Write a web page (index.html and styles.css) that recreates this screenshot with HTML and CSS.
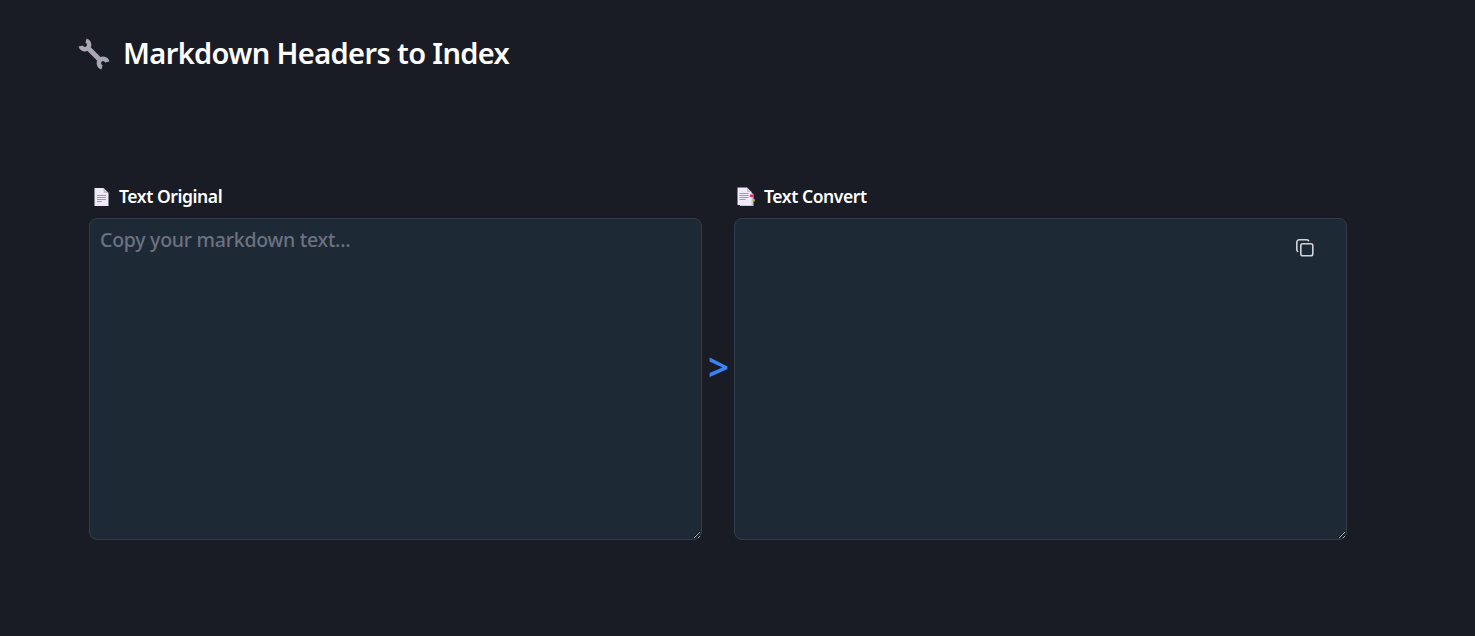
FILE: index.html
```html
<!DOCTYPE html>
<html lang="en">
<head>
<meta charset="utf-8">
<title>Markdown Headers to Index</title>
<link rel="stylesheet" href="styles.css">
</head>
<body>
<header class="header">
  <svg class="wrench" viewBox="0 0 32 32" width="32" height="32">
    <path class="wrench-shaft" d="M9.500 9.500L22.500 22.500"/>
    <path class="wrench-jaw" d="M8 2.700A4.300 4.300 0 1 1 2.700 8M24 29.300A4.300 4.300 0 1 1 29.300 24"/>
  </svg>
  <h1 class="title">Markdown Headers to Index</h1>
</header>
<main class="converter">
  <section class="panel">
    <label class="label" for="source">
      <svg class="page-icon" viewBox="0 0 20 20" width="20" height="20">
        <path fill="#eeeaf8" d="M3.500 1h9l5 5v13h-14z"/>
        <path fill="#c5bfd5" d="M12.500 1l5 5h-5z"/>
        <path class="page-lines" d="M6 8.500h9M6 10.500h9M6 12.500h9M6 14.500h5"/>
      </svg>
      <span class="label-text">Text Original</span>
    </label>
    <textarea class="field" id="source" placeholder="Copy your markdown text..."></textarea>
  </section>
  <span class="arrow">&gt;</span>
  <section class="panel">
    <label class="label" for="result">
      <svg class="page-icon" viewBox="0 0 20 20" width="20" height="20">
        <path fill="#cbc5d9" d="M4 4h9l4.500 3v12H4z"/>
        <path fill="#eeeaf8" d="M1.500 0.500h9.500l4.500 4.500v13h-14z"/>
        <path fill="#c5bfd5" d="M11 0.500l4.500 4.500h-4.500z"/>
        <path class="page-lines" d="M3.500 6.500h9M3.500 8.500h9M3.500 10.500h9M3.500 12.500h6"/>
        <path fill="#dc2671" d="M14 7.500h3v2.500h-3z"/>
        <path fill="#d5ad39" d="M16.500 12h2.300v2.500h-2.300z"/>
      </svg>
      <span class="label-text">Text Convert</span>
    </label>
    <div class="output">
      <textarea class="field" id="result"></textarea>
      <button class="copy" type="button" aria-label="Copy">
        <svg class="copy-icon" viewBox="0 0 20 20" width="20" height="20">
          <rect x="5.800" y="5.800" width="12" height="12" rx="2"/>
          <path d="M2.700 13.500C2.100 13 1.800 12.400 1.800 11.600V4.300A2.500 2.500 0 0 1 4.300 1.800h7.400c.8 0 1.400.3 1.900.9"/>
        </svg>
      </button>
    </div>
  </section>
</main>
</body>
</html>
```
FILE: styles.css
```css
* { box-sizing: border-box; }
body {
  margin: 0;
  min-height: 636px;
  background: #191b25;
  color: #fff;
  font-family: "Noto Sans", "Open Sans", sans-serif;
}
.header {
  display: flex;
  align-items: center;
  gap: 13px;
  height: 108px;
  padding-left: 78px;
}
.wrench { fill: none; stroke: #aaa6b4; }
.wrench-shaft { stroke-width: 5; }
.wrench-jaw { stroke-width: 4.4; }
.title {
  margin: 0;
  padding-bottom: 2px;
  font-size: 29px;
  line-height: 40px;
  font-weight: 600;
  letter-spacing: -0.62px;
}
.converter {
  display: flex;
  padding: 76px 0 0 89px;
}
.panel { width: 613px; }
.label {
  display: flex;
  align-items: center;
  gap: 7px;
  height: 25px;
  margin-bottom: 9px;
  padding-left: 2px;
}
.label-text {
  margin-left: 1px;
  font-size: 17.5px;
  line-height: 25px;
  font-weight: 600;
  letter-spacing: -0.42px;
}
.page-lines { fill: none; stroke: #9d98b3; }
.field {
  display: block;
  width: 613px;
  height: 322px;
  margin: 0;
  padding: 7px 10px;
  border: 1px solid #323d4a;
  border-radius: 8px;
  outline: none;
  background: #1e2936;
  color: #fff;
  font: 500 19.5px/28px "Noto Sans", "Open Sans", sans-serif;
  letter-spacing: -0.25px;
}
.field::placeholder { color: #6b7280; }
.arrow {
  width: 32px;
  padding: 158px 0 0 1px;
  color: #3b82f6;
  font-size: 37px;
  line-height: 50px;
  font-weight: 600;
  text-align: center;
}
.output { position: relative; }
.copy {
  position: absolute;
  top: 20px;
  right: 32px;
  display: flex;
  padding: 0;
  border: 0;
  background: none;
}
.copy-icon {
  fill: none;
  stroke: #d1d5db;
  stroke-width: 1.6;
  stroke-linecap: round;
}
```
